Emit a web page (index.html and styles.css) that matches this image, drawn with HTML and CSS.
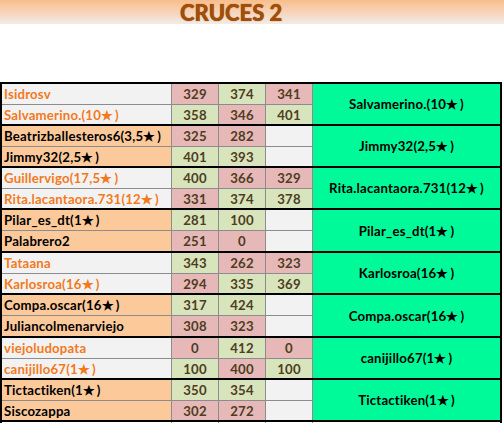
FILE: index.html
```html
<!DOCTYPE html>
<html>
<head>
<meta charset="utf-8">
<link rel="stylesheet" href="styles.css">
</head>
<body>
<div class="banner"><h1 class="title">CRUCES 2</h1></div>
<div class="sheet">
  <div class="pair odd">
    <div class="name">Isidrosv</div><div class="sc r">329</div><div class="sc g">374</div><div class="sc r">341</div>
    <div class="win">Salvamerino.(10★&#8201;)</div>
    <div class="name">Salvamerino.(10★&#8201;)</div><div class="sc g">358</div><div class="sc r">346</div><div class="sc g">401</div>
  </div>
  <div class="pair even">
    <div class="name">Beatrizballesteros6(3,5★&#8201;)</div><div class="sc r">325</div><div class="sc r">282</div><div class="sc e"></div>
    <div class="win">Jimmy32(2,5★&#8201;)</div>
    <div class="name">Jimmy32(2,5★&#8201;)</div><div class="sc g">401</div><div class="sc g">393</div><div class="sc e"></div>
  </div>
  <div class="pair odd">
    <div class="name">Guillervigo(17,5★&#8201;)</div><div class="sc g">400</div><div class="sc r">366</div><div class="sc r">329</div>
    <div class="win">Rita.lacantaora.731(12★&#8201;)</div>
    <div class="name">Rita.lacantaora.731(12★&#8201;)</div><div class="sc r">331</div><div class="sc g">374</div><div class="sc g">378</div>
  </div>
  <div class="pair even tall">
    <div class="name">Pilar_es_dt(1★&#8201;)</div><div class="sc g">281</div><div class="sc g">100</div><div class="sc e"></div>
    <div class="win">Pilar_es_dt(1★&#8201;)</div>
    <div class="name">Palabrero2</div><div class="sc r">251</div><div class="sc r">0</div><div class="sc e"></div>
  </div>
  <div class="pair odd">
    <div class="name">Tataana</div><div class="sc g">343</div><div class="sc r">262</div><div class="sc r">323</div>
    <div class="win">Karlosroa(16★&#8201;)</div>
    <div class="name">Karlosroa(16★&#8201;)</div><div class="sc r">294</div><div class="sc g">335</div><div class="sc g">369</div>
  </div>
  <div class="pair even tall">
    <div class="name">Compa.oscar(16★&#8201;)</div><div class="sc g">317</div><div class="sc g">424</div><div class="sc e"></div>
    <div class="win">Compa.oscar(16★&#8201;)</div>
    <div class="name">Juliancolmenarviejo</div><div class="sc r">308</div><div class="sc r">323</div><div class="sc e"></div>
  </div>
  <div class="pair odd">
    <div class="name">viejoludopata</div><div class="sc r">0</div><div class="sc g">412</div><div class="sc r">0</div>
    <div class="win">canijillo67(1★&#8201;)</div>
    <div class="name">canijillo67(1★&#8201;)</div><div class="sc g">100</div><div class="sc r">400</div><div class="sc g">100</div>
  </div>
  <div class="pair even last">
    <div class="name">Tictactiken(1★&#8201;)</div><div class="sc g">350</div><div class="sc g">354</div><div class="sc e"></div>
    <div class="win">Tictactiken(1★&#8201;)</div>
    <div class="name">Siscozappa</div><div class="sc r">302</div><div class="sc r">272</div><div class="sc e"></div>
  </div>
  <div class="tail">
    <div></div><div></div><div></div><div></div><div></div>
  </div>
</div>
</body>
</html>
```
FILE: styles.css
```css
html, body {
  margin: 0;
  padding: 0;
  background: #ffffff;
  overflow: hidden;
}
body {
  width: 504px;
  height: 423px;
  font-family: Lato, "Liberation Sans", sans-serif;
  font-weight: 700;
}
.banner {
  height: 24px;
  background: linear-gradient(to bottom, #f9bd8c 0%, #f6d6bd 55%, #f1ece8 100%);
}
.title {
  margin: 0;
  padding-left: 180px;
  font-size: 22px;
  line-height: 26px;
  font-weight: 900;
  color: #a44d07;
  text-shadow: 0 0 1px #7a3a06;
}
.sheet {
  margin-top: 58px;
  width: 498px;
  border-left: 2px solid #000;
  border-right: 2px solid #000;
}
.pair {
  display: grid;
  grid-template-columns: 169px 46px 46px 46px 187px;
  grid-template-rows: 20px 19px;
  column-gap: 1px;
  row-gap: 1px;
  background: #8c8c8c;
  border-top: 2px solid #000;
  font-size: 13.2px;
  letter-spacing: 0.2px;
}
.pair.tall {
  grid-template-rows: 20px 20px;
}
.pair.last {
  border-bottom: 2px solid #000;
}
.name {
  padding-left: 2px;
  line-height: 20px;
  white-space: nowrap;
  overflow: hidden;
}
.odd .name {
  background: #f2f2f2;
  color: #f27a1c;
}
.even .name {
  background: #fcc99b;
  color: #000;
}
.sc {
  text-align: center;
  line-height: 20px;
  color: #4e3d22;
}
.sc.r { background: #e6b8b7; }
.sc.g { background: #d8e4bc; }
.sc.e { background: #f2f2f2; }
.win {
  grid-column: 5;
  grid-row: 1 / span 2;
  background: #00fa9a;
  color: #000;
  display: flex;
  align-items: center;
  justify-content: center;
  white-space: nowrap;
}
.tail {
  display: grid;
  grid-template-columns: 169px 46px 46px 46px 187px;
  column-gap: 1px;
  height: 10px;
  background: #8c8c8c;
}
.tail div {
  background: #fff;
}
```
